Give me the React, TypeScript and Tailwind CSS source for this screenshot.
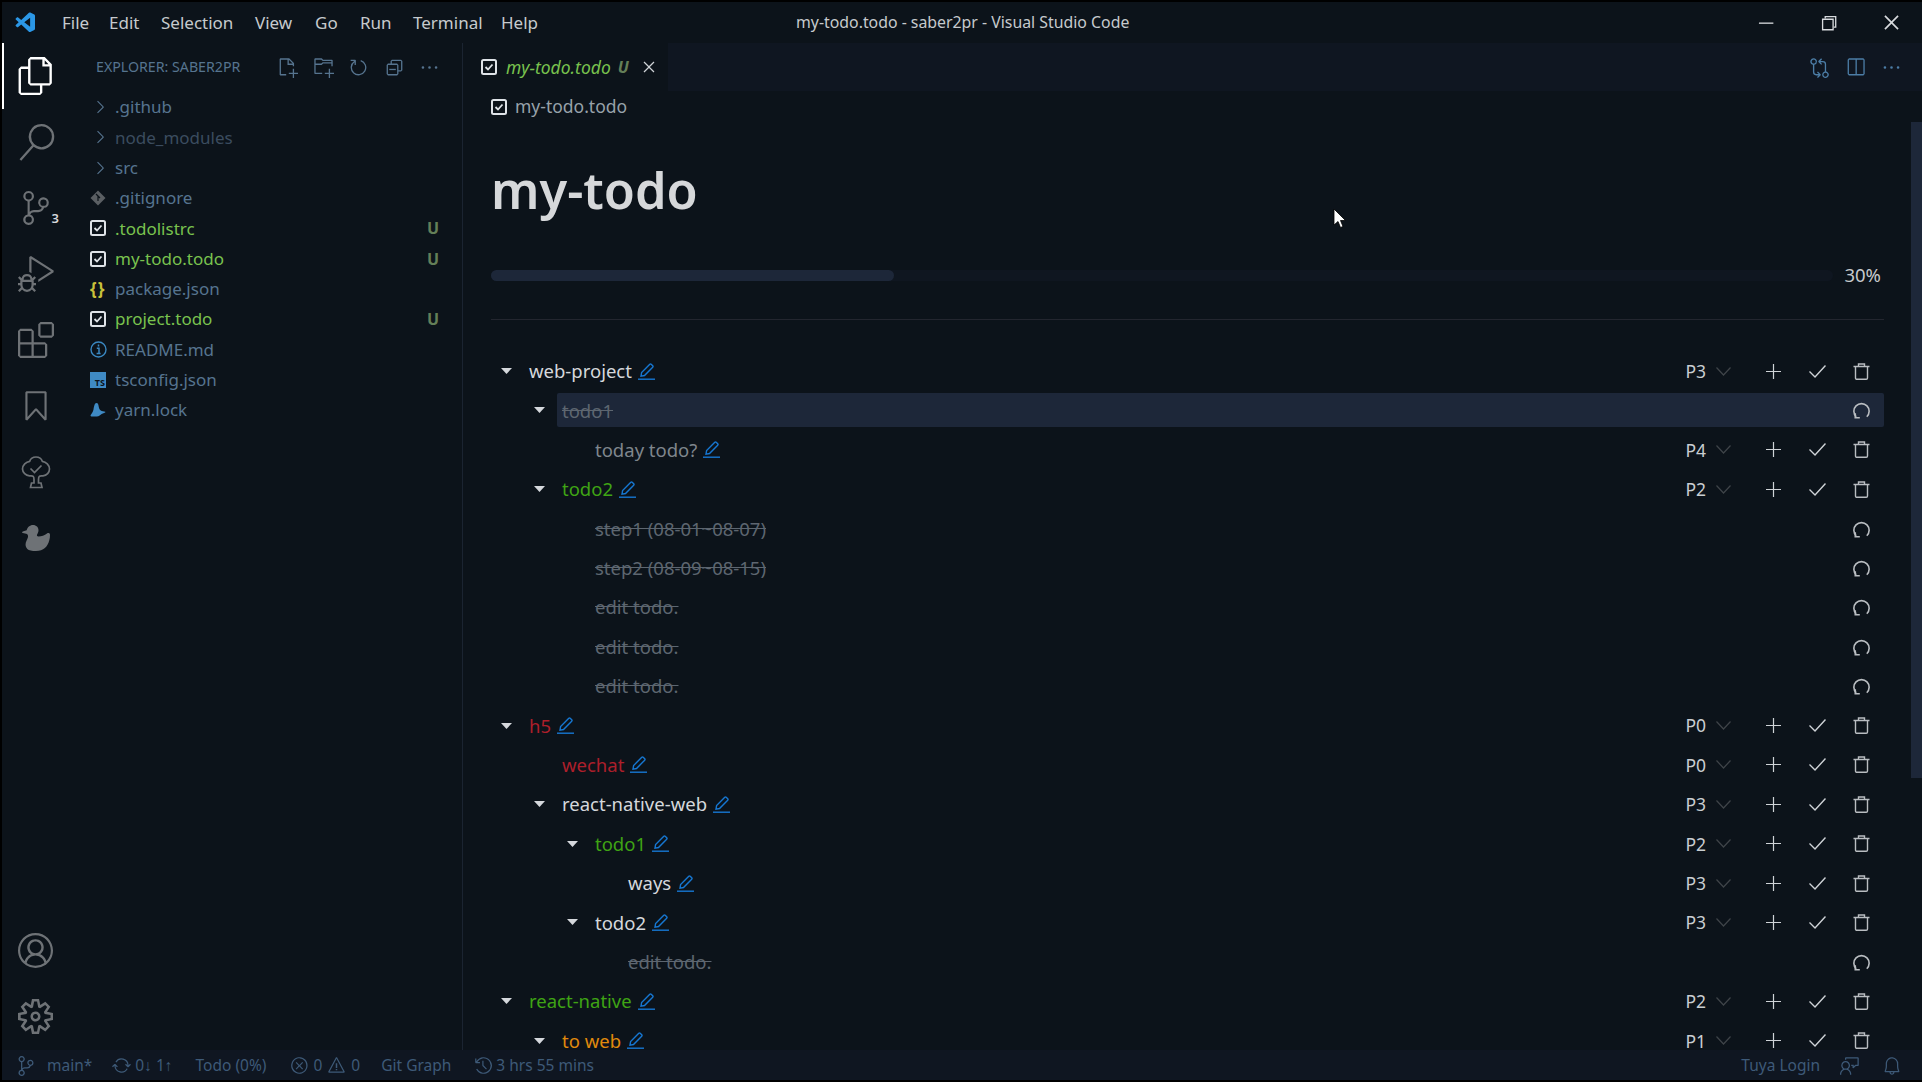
import {
  VscFiles,
  VscSearch,
  VscSourceControl,
  VscDebugAlt,
  VscExtensions,
  VscBookmark,
  VscAccount,
  VscSettingsGear,
  VscNewFile,
  VscNewFolder,
  VscRefresh,
  VscCollapseAll,
  VscEllipsis,
  VscChevronRight,
  VscClose,
  VscChromeMinimize,
  VscChromeRestore,
  VscChromeClose,
  VscSplitHorizontal,
  VscGitCompare,
  VscVscode,
  VscSync,
  VscError,
  VscWarning,
  VscHistory,
  VscBell,
  VscFeedback,
} from 'react-icons/vsc';

const font = { fontFamily: '"Noto Sans", sans-serif' };

const TodoFileIcon = () => (
  <svg width="16" height="16" viewBox="0 0 16 16" fill="none">
    <rect x="1" y="1" width="14" height="14" rx="1.5" stroke="#dfe3e8" strokeWidth="2" />
    <path d="M4.5 8l2.5 2.5 4.5-5" stroke="#dfe3e8" strokeWidth="1.8" />
  </svg>
);

const GitIcon = () => (
  <svg width="16" height="16" viewBox="0 0 16 16">
    <path d="M8 0.5L15.5 8 8 15.5 0.5 8z" fill="#5b5f63" />
    <path d="M6 4l4 4M8 6v5" stroke="#0c131a" strokeWidth="1.2" />
  </svg>
);

const InfoIcon = () => (
  <svg width="17" height="17" viewBox="0 0 17 17" fill="none">
    <circle cx="8.5" cy="8.5" r="7.5" stroke="#3a87c0" strokeWidth="1.4" />
    <path d="M8.5 3.6v2M6.8 7.2h2.2v5M6.6 12.6h4" stroke="#3a87c0" strokeWidth="1.5" />
  </svg>
);

const TsIcon = () => (
  <div className="w-4 h-4 bg-[#3f8ac4] flex items-end justify-end pr-px text-[9px] leading-[11px] font-bold text-[#0c131a]">TS</div>
);

const YarnIcon = () => (
  <svg width="16" height="16" viewBox="0 0 16 16">
    <path d="M6.5 1c1.500 0 2 1.600 2.200 3.500.3 2 1 3.600 3 4.400 1.600.6 3.800.3 3.800 1 0 .8-2.500 1.200-3.800 2.100-1.400.9-2.400 2.500-5 2.500H1.500c-.8 0-1.200-.8-.8-1.500C1.500 12 3 10 3.500 7.500 4 4.500 4.500 1 6.500 1z" fill="#3f8ac4" />
  </svg>
);

const TreeCheckIcon = () => (
  <svg width="30" height="33" viewBox="0 0 30 33" fill="none" stroke="#6e7276" strokeWidth="1.7">
    <path d="M15 1c3 0 5.500 1.800 6.300 4.300C25 5.800 28.500 9 28.500 13c0 3.500-2.800 6.400-6.500 6.800-1.800.2-2.800 0-3.500.5-.8.5-1 1.700-1 3.200V27h2.500l1 4.500H9.500l1-4.500H13v-3.500c0-1.500-.2-2.700-1-3.200-.7-.5-1.700-.3-3.500-.5C4.800 19.400 1.500 16.500 1.500 13c0-4 3.500-7.200 7.200-7.700C9.500 2.800 12 1 15 1z" />
    <path d="M9.500 12.500l4 4 7-7" />
  </svg>
);

const DuckIcon = () => (
  <svg width="28" height="26" viewBox="0 0 28 26">
    <path d="M11 0c3.300 0 5.500 2.300 5.500 5.200 0 2.100-1 3.300-1.500 4.600-.3 1 .3 1.700 1.500 1.700 3 0 6-1.200 8.500-3 1.300-.9 3-.5 3 1.400 0 1.800-.2 3.500-.7 5.300C25.800 21.500 21.500 26 14 26c-4 0-7.200-.6-8.700-2C3 21.800 3.200 18.500 4.500 15.800c1-2 1.700-3.400 1.500-5C5.800 9.200 4.500 8.700 3 8.500 1.500 8.300 0 8 0 7.300c0-.7 2.500-1.300 4.700-2C5.300 2.300 7.800 0 11 0z" fill="#6e7276" />
  </svg>
);

const Caret = () => (
  <svg width="11" height="6" viewBox="0 0 11 6">
    <path d="M0 0h11L5.5 6z" fill="#d5d8dc" />
  </svg>
);

const PenIcon = () => (
  <svg width="17" height="17" viewBox="0 0 17 17" fill="none" stroke="#1677d2" strokeWidth="1.4">
    <path d="M0 16.200h17" />
    <path d="M3 13.200l.6-3.700L11.800 1.300a1 1 0 011.400 0l1.500 1.500a1 1 0 010 1.400L6.500 12.500z" />
  </svg>
);

const PlusIcon = () => (
  <svg width="15" height="15" viewBox="0 0 15 15" stroke="#cfd3d7" strokeWidth="1.2">
    <path d="M7.5 0v15M0 7.500h15" />
  </svg>
);

const CheckIcon = () => (
  <svg width="17" height="13" viewBox="0 0 17 13" fill="none" stroke="#cfd3d7" strokeWidth="1.4">
    <path d="M0.5 6.500l5.500 5.500L16.500 0.500" />
  </svg>
);

const TrashIcon = () => (
  <svg width="17" height="17" viewBox="0 0 17 17" fill="none" stroke="#b9bdc1" strokeWidth="1.4">
    <path d="M0.5 3.500h16M5.500 3.500V1h6v2.500" />
    <path d="M2.500 3.500v11.500a1.300 1.300 0 001.300 1.300h9.400a1.300 1.300 0 001.300-1.300V3.500" />
  </svg>
);

const RedoIcon = () => (
  <svg className="mt-[2px]" width="18" height="18" viewBox="0 0 18 18" fill="none" stroke="#b9bdc1" strokeWidth="1.7">
    <path d="M14.600 15.100A8.100 8.100 0 1 0 3.400 15.100" />
    <path d="M2.400 11.400v4.800h4.800" />
  </svg>
);

const ChevronIcon = () => (
  <svg width="15" height="9" viewBox="0 0 15 9" fill="none" stroke="#3f4449" strokeWidth="1.2">
    <path d="M0.5 0.500l7 7.500 7-7.500" />
  </svg>
);

const menus = [
  { label: 'File', cls: 'w-[47px]' },
  { label: 'Edit', cls: 'w-[52px]' },
  { label: 'Selection', cls: 'w-[94px]' },
  { label: 'View', cls: 'w-[60px]' },
  { label: 'Go', cls: 'w-[45px]' },
  { label: 'Run', cls: 'w-[53px]' },
  { label: 'Terminal', cls: 'w-[88px]' },
  { label: 'Help', cls: 'w-[46px]' },
];

const TitleBar = () => (
  <div className="h-[41px] flex items-center bg-[#0c131a] relative text-[17px] text-[#c6cacd] shrink-0">
    <div className="w-[60px] pl-[12px] flex items-center">
      <VscVscode size={24} className="text-[#2b97e6]" />
    </div>
    {menus.map((m) => (
      <div key={m.label} className={m.cls}>{m.label}</div>
    ))}
    <div className="absolute left-[794px] top-[9px] text-[#c6cacd] text-[15.85px]">my-todo.todo - saber2pr - Visual Studio Code</div>
    <div className="ml-auto flex items-center gap-[42px] pr-[20px] text-[#d8dbde]">
      <VscChromeMinimize size={21} />
      <VscChromeRestore size={21} />
      <VscChromeClose size={21} />
    </div>
  </div>
);

const activityTop = [
  { icon: <VscFiles size={38} className="text-white" />, active: true },
  { icon: <VscSearch size={37} className="text-[#6e7276]" /> },
  {
    icon: (
      <div className="relative">
        <VscSourceControl size={34} className="text-[#6e7276]" />
        <span className="absolute right-[-6px] bottom-[-3px] text-[13px] font-semibold text-[#d5d8dc]">3</span>
      </div>
    ),
  },
  { icon: <VscDebugAlt size={36} className="text-[#6e7276]" /> },
  { icon: <VscExtensions size={36} className="text-[#6e7276]" /> },
  { icon: <VscBookmark size={34} className="text-[#6e7276]" /> },
  { icon: <TreeCheckIcon /> },
  { icon: <DuckIcon /> },
];

const ActivityBar = () => (
  <div className="w-[66px] shrink-0 flex flex-col justify-between bg-[#0c131a]">
    <div className="flex flex-col">
      {activityTop.map((a, i) => (
        <div
          key={i}
          className={`h-[66px] flex items-center justify-center border-l-2 ${a.active ? 'border-white' : 'border-transparent'}`}
        >
          {a.icon}
        </div>
      ))}
    </div>
    <div className="flex flex-col">
      <div className="h-[66px] flex items-center justify-center">
        <VscAccount size={35} className="text-[#6e7276]" />
      </div>
      <div className="h-[66px] mb-px flex items-center justify-center">
        <VscSettingsGear size={35} className="text-[#6e7276]" />
      </div>
    </div>
  </div>
);

const files = [
  { name: '.github', chevron: true },
  { name: 'node_modules', chevron: true, dim: true },
  { name: 'src', chevron: true },
  { name: '.gitignore', icon: <GitIcon /> },
  { name: '.todolistrc', icon: <TodoFileIcon />, untracked: true },
  { name: 'my-todo.todo', icon: <TodoFileIcon />, untracked: true },
  { name: 'package.json', icon: <span className="text-[#c9c13a] text-[17px] font-bold leading-4 tracking-[1px]">{'{}'}</span> },
  { name: 'project.todo', icon: <TodoFileIcon />, untracked: true },
  { name: 'README.md', icon: <InfoIcon /> },
  { name: 'tsconfig.json', icon: <TsIcon /> },
  { name: 'yarn.lock', icon: <YarnIcon /> },
];

const SideBar = () => (
  <div className="w-[395px] shrink-0 border-r border-[#1b2431] bg-[#0c131a] flex flex-col">
    <div className="h-[48px] flex items-center pl-[28px] pr-[22px]">
      <span className="text-[14.2px] text-[#56748f]">EXPLORER: SABER2PR</span>
      <div className="ml-auto flex items-center gap-[14.5px] text-[#56748f]">
        <VscNewFile size={21} />
        <VscNewFolder size={21} />
        <VscRefresh size={21} />
        <VscCollapseAll size={21} />
        <VscEllipsis size={21} />
      </div>
    </div>
    <div className="pt-px flex flex-col">
      {files.map((f) => (
        <div key={f.name} className="h-[30.3px] flex items-center pl-[22px] pr-[23px]">
          <div className="w-[25px] flex items-center">
            {f.chevron ? <VscChevronRight size={20} className="text-[#56748f]" /> : f.icon}
          </div>
          <span
            className={`text-[17px] ${f.untracked ? 'text-[#79c24e]' : f.dim ? 'text-[#3b4c5f]' : 'text-[#56748f]'}`}
          >
            {f.name}
          </span>
          {f.untracked && <span className="ml-auto text-[16px] font-bold text-[#647f58]">U</span>}
        </div>
      ))}
    </div>
  </div>
);

type Todo = {
  level: 0 | 1 | 2 | 3;
  text: string;
  color?: string;
  pri?: string;
  done?: boolean;
  caret?: boolean;
  selected?: boolean;
};

const indent = ['pl-0', 'pl-[33px]', 'pl-[66px]', 'pl-[99px]'];

const todos: Todo[] = [
  { level: 0, text: 'web-project', color: 'text-[#d5d8dc]', pri: 'P3', caret: true },
  { level: 1, text: 'todo1', done: true, caret: true, selected: true },
  { level: 2, text: 'today todo?', color: 'text-[#7f868d]', pri: 'P4' },
  { level: 1, text: 'todo2', color: 'text-[#3fa414]', pri: 'P2', caret: true },
  { level: 2, text: 'step1 (08-01~08-07)', done: true },
  { level: 2, text: 'step2 (08-09~08-15)', done: true },
  { level: 2, text: 'edit todo.', done: true },
  { level: 2, text: 'edit todo.', done: true },
  { level: 2, text: 'edit todo.', done: true },
  { level: 0, text: 'h5', color: 'text-[#ad1f2b]', pri: 'P0', caret: true },
  { level: 1, text: 'wechat', color: 'text-[#ad1f2b]', pri: 'P0' },
  { level: 1, text: 'react-native-web', color: 'text-[#d5d8dc]', pri: 'P3', caret: true },
  { level: 2, text: 'todo1', color: 'text-[#3fa414]', pri: 'P2', caret: true },
  { level: 3, text: 'ways', color: 'text-[#d5d8dc]', pri: 'P3' },
  { level: 2, text: 'todo2', color: 'text-[#d5d8dc]', pri: 'P3', caret: true },
  { level: 3, text: 'edit todo.', done: true },
  { level: 0, text: 'react-native', color: 'text-[#3fa414]', pri: 'P2', caret: true },
  { level: 1, text: 'to web', color: 'text-[#e08a0c]', pri: 'P1', caret: true },
];

const TodoRow = ({ todo }: { todo: Todo }) => (
  <div className={`h-[34px] mb-[5.4px] shrink-0 flex items-center ${indent[todo.level]}`}>
    <div className="w-[33px] shrink-0 flex justify-center pr-[3px]">{todo.caret && <Caret />}</div>
    <div className={`flex-1 h-full flex items-center rounded-[2px] pl-[5px] ${todo.selected ? 'bg-[#1d2739]' : ''}`}>
      {todo.done ? (
        <span className="text-[18.5px] text-[#5d6670] line-through">{todo.text}</span>
      ) : (
        <>
          <span className={`text-[18.5px] ${todo.color}`}>{todo.text}</span>
          <span className="ml-[6px] flex"><PenIcon /></span>
        </>
      )}
      <div className="ml-auto flex items-center pr-[14.5px]">
        {todo.pri && (
          <>
            <span className="text-[17.5px] text-[#c9cdd1] w-[30px]">{todo.pri}</span>
            <ChevronIcon />
            <div className="ml-[35px] flex"><PlusIcon /></div>
            <div className="ml-[28px] flex"><CheckIcon /></div>
          </>
        )}
        <div className="ml-[27px] flex w-[17px] justify-center">
          {todo.done ? <RedoIcon /> : <TrashIcon />}
        </div>
      </div>
    </div>
  </div>
);

const Editor = () => (
  <div className="flex-1 min-w-0 flex flex-col relative bg-[#0c131a] overflow-hidden">
    <div className="h-[48px] shrink-0 flex bg-[#0f1621]">
      <div className="w-[205px] bg-[#0c131a] flex items-center pl-[18px]">
        <TodoFileIcon />
        <span className="ml-[9px] text-[17.5px] italic text-[#79c24e]">my-todo.todo</span>
        <span className="ml-[7px] text-[16px] font-bold italic text-[#647f58]">U</span>
        <VscClose size={20} className="ml-[10px] text-[#cfd3d7]" />
      </div>
      <div className="ml-auto flex items-center gap-[15px] pr-[20px] text-[#4c7da6]">
        <VscGitCompare size={21} />
        <VscSplitHorizontal size={21} />
        <VscEllipsis size={21} />
      </div>
    </div>
    <div className="h-[31px] shrink-0 flex items-center pl-[28px]">
      <TodoFileIcon />
      <span className="ml-[8px] text-[17.5px] text-[#98a2aa]">my-todo.todo</span>
    </div>
    <div className="pl-[28px] pr-[38px] flex flex-col">
      <h1 className="mt-[32px] h-[72px] text-[50.5px] leading-[72px] font-semibold text-[#d6d8da]">my-todo</h1>
      <div className="mt-[38px] h-[22px] flex items-center">
        <div className="flex-1 h-[11px] rounded-full bg-[#0f1620]">
          <div className="w-[30%] h-full rounded-full bg-[#1d2739]" />
        </div>
        <span className="ml-[11px] mr-[3px] text-[18.5px] text-[#c6cacd]">30%</span>
      </div>
      <div className="mt-[33px] border-t border-[#23262f]" />
      <div className="mt-[34px] flex flex-col">
        {todos.map((t, i) => (
          <TodoRow key={i} todo={t} />
        ))}
      </div>
    </div>
    {/* overlay scrollbar */}
    <div className="absolute right-0 top-[79px] w-[11px] h-[656px] bg-[#1d2739]" />
    {/* mouse pointer */}
    <svg className="absolute left-[870px] top-[165px]" width="13" height="21" viewBox="0 0 13 21">
      <path d="M1 1v16l4-3.500 2.500 6 2.500-1-2.500-6H12.500z" fill="#fff" stroke="#000" strokeWidth="0.8" />
    </svg>
  </div>
);

const StatusBar = () => (
  <div className="h-[30px] shrink-0 flex items-center bg-[#0f1621] text-[15.5px] text-[#3e5a78] pt-px pl-[14px] pr-[20px]">
    <VscSourceControl size={20} />
    <span className="ml-[11px]">main*</span>
    <VscSync size={19} className="ml-[20px]" />
    <span className="ml-[4px]">0↓ 1↑</span>
    <span className="ml-[23px]">Todo (0%)</span>
    <VscError size={19} className="ml-[24px]" />
    <span className="ml-[4px]">0</span>
    <VscWarning size={19} className="ml-[5px]" />
    <span className="ml-[5px]">0</span>
    <span className="ml-[21px]">Git Graph</span>
    <VscHistory size={19} className="ml-[23px]" />
    <span className="ml-[3px]">3 hrs 55 mins</span>
    <span className="ml-auto">Tuya Login</span>
    <VscFeedback size={20} className="ml-[20px]" />
    <VscBell size={20} className="ml-[22px]" />
  </div>
);

export default function App() {
  return (
    <div className="w-screen h-screen bg-black pt-[2px] pl-[2px] pb-[2px] flex flex-col overflow-hidden" style={font}>
      <TitleBar />
      <div className="flex-1 min-h-0 flex">
        <ActivityBar />
        <SideBar />
        <Editor />
      </div>
      <StatusBar />
    </div>
  );
}
